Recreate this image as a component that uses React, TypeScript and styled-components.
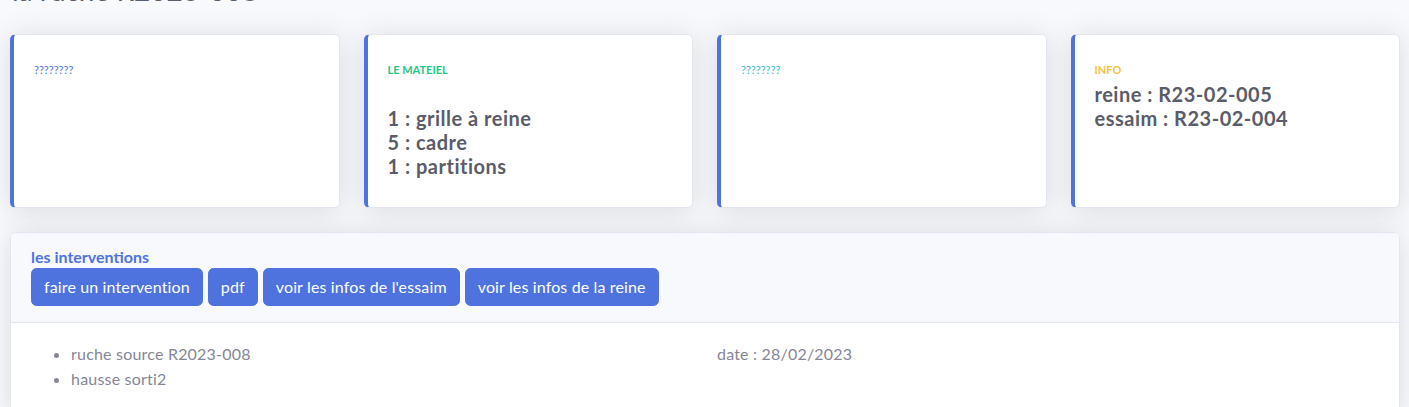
import styled, { createGlobalStyle } from 'styled-components'

const GlobalStyle = createGlobalStyle`
  html, body {
    margin: 0;
    padding: 0;
    background: #f8f9fc;
    font-family: 'Lato', 'Noto Sans', sans-serif;
    color: #858796;
    overflow: hidden;
  }
  * {
    box-sizing: border-box;
  }
`

const colors = {
  primary: '#4e73df',
  success: '#1cc88a',
  info: '#36b9cc',
  warning: '#f6c23e',
  gray800: '#5a5c69',
  border: '#e3e6f0',
}

const Page = styled.main`
  padding: 0 9px 0 10px;
  height: 407px;
  overflow: hidden;
`

const PageTitle = styled.h1`
  margin: -26px 0 26px 2px;
  font-size: 28px;
  font-weight: 400;
  line-height: 1.2;
  color: ${colors.gray800};
`

const CardRow = styled.div`
  display: grid;
  grid-template-columns: repeat(4, 1fr);
  gap: 24px;
  margin-bottom: 24px;
`

const StatCard = styled.div`
  background: #fff;
  border: 1px solid ${colors.border};
  border-left: 4px solid ${colors.primary};
  border-radius: 5.6px;
  box-shadow: 0 2.4px 28px 0 rgba(58, 59, 69, 0.15);
  padding: 27px 20px 21px 20px;
`

const StatLabel = styled.div<{ $tone: string; $bold?: boolean }>`
  font-size: 11px;
  line-height: 1.5;
  margin-bottom: 4px;
  text-transform: uppercase;
  font-weight: ${({ $bold }) => ($bold ? 700 : 400)};
  color: ${({ $tone }) => $tone};
`

const StatValue = styled.div`
  font-size: 20px;
  line-height: 1.2;
  font-weight: 700;
  letter-spacing: 0.5px;
  color: ${colors.gray800};
  margin-bottom: 8px;
`

const Panel = styled.section`
  background: #fff;
  border: 1px solid ${colors.border};
  border-radius: 5.6px;
  box-shadow: 0 2.4px 28px 0 rgba(58, 59, 69, 0.15);
  overflow: hidden;
`

const PanelHeader = styled.header`
  background: #f8f9fc;
  border-bottom: 1px solid ${colors.border};
  padding: 14px 20px 16px 20px;
`

const PanelTitle = styled.h6`
  margin: 0 0 2px 0;
  font-size: 16px;
  line-height: 1.2;
  font-weight: 700;
  color: ${colors.primary};
`

const Toolbar = styled.div`
  display: flex;
  gap: 5px;
`

const Button = styled.button`
  font-family: inherit;
  font-size: 16px;
  line-height: 24px;
  letter-spacing: 0.14px;
  padding: 6px 12px;
  border: 1px solid ${colors.primary};
  border-radius: 5.6px;
  background: ${colors.primary};
  color: #fff;
  cursor: pointer;
`

const PanelBody = styled.div`
  padding: 18px 20px 20px 20px;
  display: grid;
  grid-template-columns: 1fr 1fr;
  gap: 24px;
  font-size: 16px;
  letter-spacing: 0.2px;
  color: #858796;
`

const List = styled.ul`
  margin: 0;
  padding-left: 40px;
  line-height: 25px;
`

const DateText = styled.div`
  line-height: 25px;
`

const App = () => {
  return (
    <>
      <GlobalStyle />
      <Page>
        <PageTitle>la ruche R2023-008</PageTitle>

        <CardRow>
          <StatCard>
            <StatLabel $tone={colors.primary}>????????</StatLabel>
          </StatCard>
          <StatCard>
            <StatLabel $tone={colors.success} $bold>
              le mateiel
            </StatLabel>
            <StatValue>
              <br />
              1 : grille à reine
              <br />5 : cadre
              <br />1 : partitions
            </StatValue>
          </StatCard>
          <StatCard>
            <StatLabel $tone={colors.info}>????????</StatLabel>
          </StatCard>
          <StatCard>
            <StatLabel $tone={colors.warning} $bold>
              info
            </StatLabel>
            <StatValue>
              reine : R23-02-005
              <br />
              essaim : R23-02-004
            </StatValue>
          </StatCard>
        </CardRow>

        <Panel>
          <PanelHeader>
            <PanelTitle>les interventions</PanelTitle>
            <Toolbar>
              <Button>faire un intervention</Button>
              <Button>pdf</Button>
              <Button>voir les infos de l'essaim</Button>
              <Button>voir les infos de la reine</Button>
            </Toolbar>
          </PanelHeader>
          <PanelBody>
            <List>
              <li>ruche source R2023-008</li>
              <li>hausse sorti2</li>
            </List>
            <DateText>date : 28/02/2023</DateText>
          </PanelBody>
        </Panel>
      </Page>
    </>
  )
}

export default App
